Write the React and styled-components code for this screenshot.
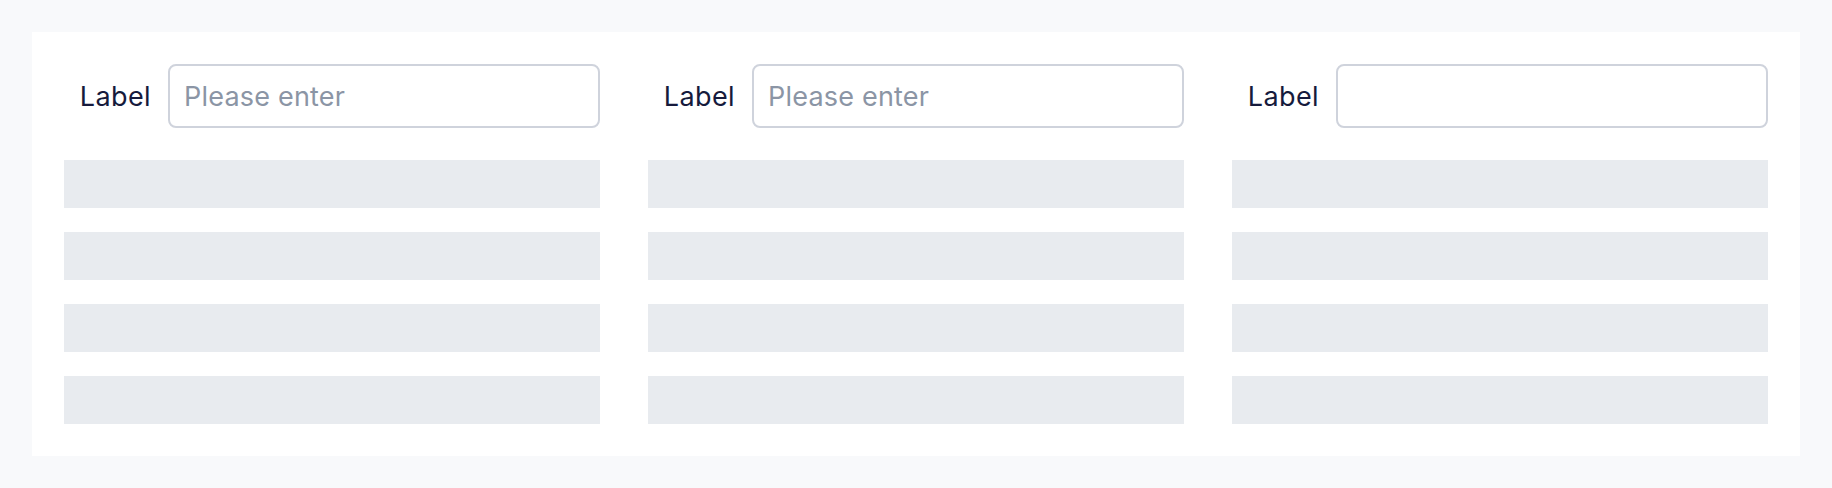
import React from 'react';
import styled, { createGlobalStyle } from 'styled-components';

const GlobalStyle = createGlobalStyle`
  body {
    margin: 0;
    background: #f8f9fb;
    font-family: Inter, "Noto Sans", sans-serif;
  }
`;

const Page = styled.div`
  padding: 32px;
  background: #f8f9fb;
`;

const Card = styled.div`
  background: #ffffff;
  padding: 32px;
  display: grid;
  grid-template-columns: repeat(3, minmax(0, 1fr));
  column-gap: 48px;
`;

const Column = styled.div`
  display: flex;
  flex-direction: column;
  gap: 24px;
  min-width: 0;
`;

const FormRow = styled.div`
  display: flex;
  align-items: center;
  height: 64px;
  margin-bottom: 8px;
`;

const Label = styled.label`
  flex: 0 0 104px;
  box-sizing: border-box;
  padding-right: 17px;
  text-align: right;
  font-size: 27px;
  letter-spacing: 0.4px;
  color: #161a3c;
`;

const Input = styled.input`
  flex: 1 1 0;
  width: 0;
  min-width: 0;
  height: 64px;
  box-sizing: border-box;
  padding: 0 14px;
  border: 2px solid #cfd3dc;
  border-radius: 8px;
  font-family: Inter, "Noto Sans", sans-serif;
  font-size: 27px;
  letter-spacing: 0.2px;
  color: #161a3c;
  outline: none;

  &::placeholder {
    color: #8b95a5;
  }
`;

const Bar = styled.div`
  height: 48px;
  background: #e8ebef;
`;

const columns = [
  { placeholder: 'Please enter' },
  { placeholder: 'Please enter' },
  { placeholder: '' },
];

const App = () => (
  <>
    <GlobalStyle />
    <Page>
      <Card>
        {columns.map((col, i) => (
          <Column key={i}>
            <FormRow>
              <Label>Label</Label>
              <Input placeholder={col.placeholder} />
            </FormRow>
            {[0, 1, 2, 3].map(n => (
              <Bar key={n} />
            ))}
          </Column>
        ))}
      </Card>
    </Page>
  </>
);

export default App;
